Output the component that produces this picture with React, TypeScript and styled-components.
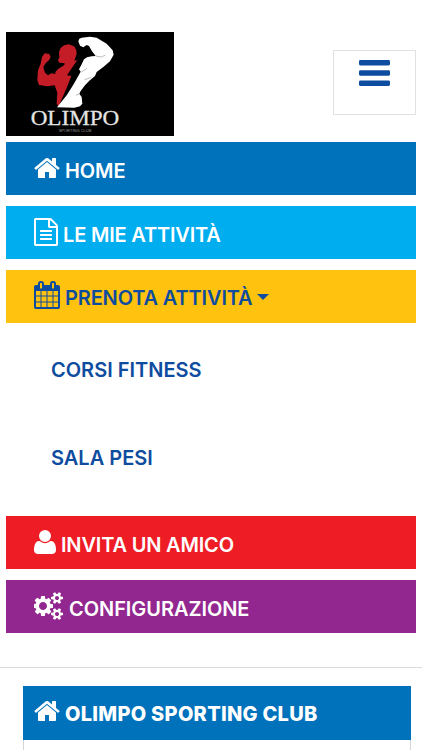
import React from 'react';
import styled, { createGlobalStyle } from 'styled-components';

const GlobalStyle = createGlobalStyle`
  body {
    background-color: #fff;
    font-family: Inter, 'Liberation Sans', sans-serif;
    margin: 0;
    overflow: hidden;
  }
`;

const Page = styled.div`
  height: 750px;
  overflow: hidden;
`;
const Header = styled.header`
  align-items: flex-start;
  display: flex;
  justify-content: space-between;
  padding: 32px 6px 6px;

  .logo {
    display: block;
    height: 104px;
    width: 168px;
  }
`;
const Toggler = styled.button`
  background: #fff;
  border: 1px solid #e2e2e2;
  display: flex;
  height: 65px;
  justify-content: center;
  margin-top: 18px;
  padding: 4px 0 0;
  width: 83px;

  svg {
    height: 36px;
    width: 36px;
  }
`;
const Nav = styled.nav`
  display: flex;
  flex-direction: column;
  gap: 11px;
  padding: 0 6px;
`;
const NavItem = styled.a<{ $bg: string; $color?: string; $shift?: number }>`
  background-color: ${({ $bg }) => $bg};
  box-sizing: border-box;
  color: ${({ $color }) => $color || '#fff'};
  display: flex;
  gap: 5px;
  height: 53px;
  padding: ${({ $shift }) => 12 + ($shift || 0)}px 28px 0;
`;
const Label = styled.span<{ $spacing?: number; $weight?: number }>`
  font-size: 20px;
  font-weight: ${({ $weight }) => $weight || 600};
  letter-spacing: ${({ $spacing }) => $spacing || 0}px;
  line-height: 34px;
  white-space: nowrap;
`;
const Glyph = styled.svg`
  display: block;
  fill: currentColor;
  flex: none;
  height: 28px;
`;
const Caret = styled.span`
  border-left: 6px solid transparent;
  border-right: 6px solid transparent;
  border-top: 6px solid currentColor;
  height: 0;
  margin-top: 13px;
`;
const SubMenu = styled.div`
  color: #0e4c9f;
  display: flex;
  flex-direction: column;
  gap: 54px;
  padding: 19px 45px 30px;
`;
const Divider = styled.hr`
  border: 0;
  border-top: 1px solid #dcdcdc;
  margin: 34px 0 18px;
`;
const Card = styled.section`
  border: 1px solid #d5d5d5;
  border-top: 0;
  height: 90px;
  margin: 0 11px 0 23px;
`;
const CardTitle = styled.div`
  background-color: #0072bc;
  box-sizing: border-box;
  color: #fff;
  display: flex;
  gap: 5px;
  height: 54px;
  margin: 0 -1px;
  padding: 11px 11px 0;
`;

const smallCog =
  'v140q0 16-149 31-12 27-30 52 51 113 51 138 0 4-4 7-122 71-124 71-8 0-46-47t-52-68q-20 2-30 2t-30-2q-14 21-52 68t-46 47q-2 0-124-71-4-3-4-7 0-25 51-138-18-25-30-52-149-15-149-31v-140q0-16 149-31 13-29 30-52-51-113-51-138 0-4 4-7 4-2 35-20t59-34 30-16q8 0 46 46.5t52 67.5q20-2 30-2t30 2q51-71 92-112l6-2q4 0 124 70 4 3 4 7 0 25-51 138 17 23 30 52 149 15 149 31z';

const icons = {
  home: {
    x: 64,
    width: 1664,
    d: 'M1472 992v480q0 26-19 45t-45 19h-384v-384h-256v384h-384q-26 0-45-19t-19-45v-480q0-1 .5-3t.5-3l575-474 575 474q1 2 1 6zm223-69l-62 74q-8 9-21 11h-3q-13 0-21-7l-692-577-692 577q-12 8-24 7-13-2-21-11l-62-74q-8-10-7-23.5t11-21.5l719-599q32-26 76-26t76 26l244 204v-195q0-14 9-23t23-9h192q14 0 23 9t9 23v408l219 182q10 8 11 21.5t-7 23.5z',
  },
  file: {
    x: 128,
    width: 1536,
    d: 'M1596 380q28 28 48 76t20 88v1152q0 40-28 68t-68 28h-1344q-40 0-68-28t-28-68v-1600q0-40 28-68t68-28h896q40 0 88 20t76 48zm-444-244v376h376q-10-29-22-41l-313-313q-12-12-41-22zm384 1528v-1024h-416q-40 0-68-28t-28-68v-416h-768v1536h1280zm-1024-864q0-14 9-23t23-9h704q14 0 23 9t9 23v64q0 14-9 23t-23 9h-704q-14 0-23-9t-9-23v-64zm736 224q14 0 23 9t9 23v64q0 14-9 23t-23 9h-704q-14 0-23-9t-9-23v-64q0-14 9-23t23-9h704zm0 256q14 0 23 9t9 23v64q0 14-9 23t-23 9h-704q-14 0-23-9t-9-23v-64q0-14 9-23t23-9h704z',
  },
  calendar: {
    x: 64,
    width: 1664,
    d: 'M192 1664h288v-288h-288v288zm352 0h320v-288h-320v288zm-352-352h288v-320h-288v320zm352 0h320v-320h-320v320zm-352-384h288v-288h-288v288zm736 736h320v-288h-320v288zm-384-736h320v-288h-320v288zm768 736h288v-288h-288v288zm-384-352h320v-320h-320v320zm-352-864v-288q0-13-9.5-22.5t-22.5-9.5h-64q-13 0-22.5 9.5t-9.5 22.5v288q0 13 9.5 22.5t22.5 9.5h64q13 0 22.5-9.5t9.5-22.5zm736 864h288v-320h-288v320zm-384-384h320v-288h-320v288zm384 0h288v-288h-288v288zm32-480v-288q0-13-9.5-22.5t-22.5-9.5h-64q-13 0-22.5 9.5t-9.5 22.5v288q0 13 9.5 22.5t22.5 9.5h64q13 0 22.5-9.5t9.5-22.5zm384-64v1280q0 52-38 90t-90 38h-1408q-52 0-90-38t-38-90v-1280q0-52 38-90t90-38h128v-96q0-66 47-113t113-47h64q66 0 113 47t47 113v96h384v-96q0-66 47-113t113-47h64q66 0 113 47t47 113v96h128q52 0 90 38t38 90z',
  },
  user: {
    x: 192,
    width: 1408,
    d: 'M1600 1405q0 120-73 189.5t-194 69.5h-874q-121 0-194-69.5t-73-189.5q0-53 3.5-103.5t14-109 26.5-108.5 43-97.5 62-81 85.5-53.5 111.5-20q9 0 42 21.5t74.5 48 108 48 133.5 21.5 133.5-21.5 108-48 74.5-48 42-21.5q61 0 111.5 20t85.5 53.5 62 81 43 97.5 26.5 108.5 14 109 3.5 103.5zm-320-893q0 159-112.5 271.5t-271.5 112.5-271.5-112.5-112.5-271.5 112.5-271.5 271.5-112.5 271.5 112.5 112.5 271.5z',
  },
  cogs: {
    x: 0,
    width: 1920,
    d: `M832 896q0-106-75-181t-181-75-181 75-75 181 75 181 181 75 181-75 75-181zm768 512q0-52-38-90t-90-38-90 38-38 90q0 53 37.5 90.5t90.5 37.5 90.5-37.5 37.5-90.5zm0-1024q0-52-38-90t-90-38-90 38-38 90q0 53 37.5 90.5t90.5 37.5 90.5-37.5 37.5-90.5zm-384 421v185q0 10-7 19.5t-16 10.5l-155 24q-11 35-32 76 34 48 90 115 7 11 7 20 0 12-7 19-23 30-82.5 89.5t-78.5 59.5q-11 0-21-7l-115-90q-37 19-77 31-11 108-23 155-7 24-30 24h-186q-11 0-20-7.5t-10-17.5l-23-153q-34-10-75-31l-118 89q-7 7-20 7-11 0-21-8-144-133-144-160 0-9 7-19 10-14 41-53t47-61q-23-44-35-82l-152-24q-10-1-17-9.5t-7-19.5v-185q0-10 7-19.5t16-10.5l155-24q11-35 32-76-34-48-90-115-7-11-7-20 0-12 7-20 22-30 82-89t79-59q11 0 21 7l115 90q34-18 77-32 11-108 23-154 7-24 30-24h186q11 0 20 7.5t10 17.5l23 153q34 10 75 31l118-89q8-7 20-7 11 0 21 8 144 133 144 160 0 8-7 19-12 16-42 54t-45 60q23 48 34 82l152 23q10 2 17 10.5t7 19.5zm640 533${smallCog}m0-1024${smallCog}`,
  },
};

const Icon = ({ name }: { name: keyof typeof icons }) => {
  const { x, width, d } = icons[name];
  return (
    <Glyph viewBox={`${x} 0 ${width} 1792`} width={width / 64}>
      <path d={d} />
    </Glyph>
  );
};

const Logo = () => (
  <svg className="logo" viewBox="0 0 504 312" preserveAspectRatio="none">
    <rect width="504" height="312" fill="#000" />
    <path
      fill="#c41d27"
      d="M174 40L189 37L204 43L211 54L212 66L205 86L214 84L183 130L196 132L181 170L158 222L152 216L154 182L146 160L124 163L99 159L94 145L96 115L104 95L108 75L116 64L130 66L134 75L129 85L120 92L112 105L117 122L126 130L136 124L148 126L148 120L156 111L175 99L176 94L160 92L156 85L160 76L159 60L164 48Z"
    />
    <path
      fill="#fff"
      d="M217 28L220 20L227 17L252 14L272 17L302 35L320 55L323 68L312 88L292 105L272 120L267 132L250 146L237 160L224 177L220 185L227 195L229 215L222 223L205 227L153 226L182 190L202 158L224 119L219 112L227 97L234 82L243 76L257 73L269 72L258 58L249 42L242 39L232 46L222 41Z"
    />
    <path
      d="M269 72L286 75L298 69M226 120L243 109M236 143L256 136M210 190L221 185"
      stroke="#999"
      strokeWidth="2"
      fill="none"
    />
    <text
      x="74"
      y="280"
      fill="#e4e4e4"
      stroke="#e4e4e4"
      strokeWidth="0.8"
      fontFamily="'Liberation Serif', serif"
      fontSize="66"
      textLength="266"
      lengthAdjust="spacingAndGlyphs"
    >
      OLIMPO
    </text>
    <text
      x="158"
      y="299"
      fill="#999"
      fontFamily="'Liberation Sans', sans-serif"
      fontSize="13"
      textLength="98"
      lengthAdjust="spacingAndGlyphs"
    >
      SPORTING CLUB
    </text>
  </svg>
);

const App = () => {
  return (
    <Page>
      <GlobalStyle />
      <Header>
        <Logo />
        <Toggler aria-label="Menu">
          <svg viewBox="0 0 36 36" fill="#0e4c9f">
            <rect x="2" y="5" width="31" height="5.4" rx="1.4" />
            <rect x="2" y="15.3" width="31" height="5.4" rx="1.4" />
            <rect x="2" y="25.6" width="31" height="5.4" rx="1.4" />
          </svg>
        </Toggler>
      </Header>
      <Nav>
        <NavItem $bg="#0072bc">
          <Icon name="home" />
          <Label $spacing={-0.1}>HOME</Label>
        </NavItem>
        <NavItem $bg="#00adef">
          <Icon name="file" />
          <Label $spacing={-0.18}>LE MIE ATTIVITÀ</Label>
        </NavItem>
        <NavItem $bg="#ffc20e" $color="#0e4c9f" $shift={-1}>
          <Icon name="calendar" />
          <Label $spacing={-0.15}>PRENOTA ATTIVITÀ</Label>
          <Caret />
        </NavItem>
        <SubMenu>
          <Label>CORSI FITNESS</Label>
          <Label>SALA PESI</Label>
        </SubMenu>
        <NavItem $bg="#ee1c25">
          <Icon name="user" />
          <Label $spacing={-0.17}>INVITA UN AMICO</Label>
        </NavItem>
        <NavItem $bg="#92278f">
          <Icon name="cogs" />
          <Label $spacing={-0.05}>CONFIGURAZIONE</Label>
        </NavItem>
      </Nav>
      <Divider />
      <Card>
        <CardTitle>
          <Icon name="home" />
          <Label $weight={800} $spacing={0.27}>
            OLIMPO SPORTING CLUB
          </Label>
        </CardTitle>
      </Card>
    </Page>
  );
};

export default App;
